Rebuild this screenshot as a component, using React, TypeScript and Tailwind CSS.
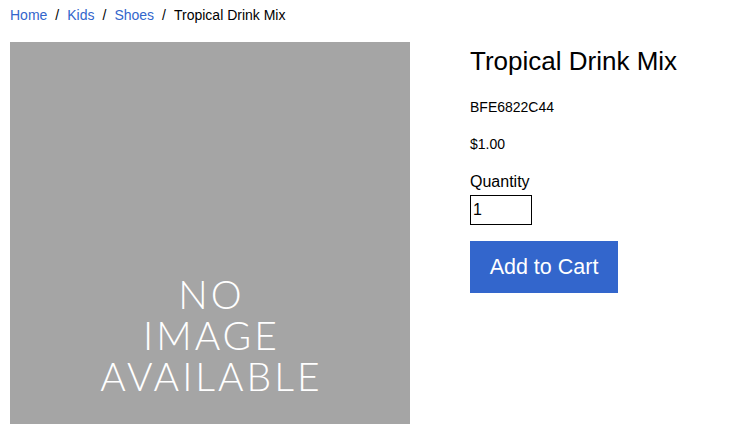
export default function App() {
  return (
    <div className="min-h-screen bg-white px-[10px] text-black" style={{ fontFamily: '"Liberation Sans", Arial, sans-serif' }}>
      {/* breadcrumb */}
      <nav className="flex h-[42px] items-start pt-[7px] text-[14px] leading-[16px]">
        <a href="#" className="text-[#3366cc]">Home</a>
        <span className="px-[8px]">/</span>
        <a href="#" className="text-[#3366cc]">Kids</a>
        <span className="px-[8px]">/</span>
        <a href="#" className="text-[#3366cc]">Shoes</a>
        <span className="px-[8px]">/</span>
        <span>Tropical Drink Mix</span>
      </nav>

      <div className="flex gap-[60px]">
        {/* placeholder image */}
        <div className="flex h-[400px] w-[400px] shrink-0 flex-col items-center bg-[#a5a5a5] pt-[232px] text-white">
          <div
            className="pl-[3px] text-center text-[39px] font-light leading-[41px] tracking-[3px]"
            style={{ fontFamily: 'Lato, "Open Sans", sans-serif' }}
          >
            <div>NO</div>
            <div>IMAGE</div>
            <div>AVAILABLE</div>
          </div>
        </div>

        {/* details */}
        <div className="flex flex-col items-start">
          <h1 className="mt-[4px] text-[26px] leading-[30px]">Tropical Drink Mix</h1>
          <p className="mt-[23px] text-[14px] leading-[16px]">BFE6822C44</p>
          <p className="mt-[21px] text-[14px] leading-[16px]">$1.00</p>
          <label className="mt-[21px] text-[16px] leading-[18px]" htmlFor="qty">Quantity</label>
          <input
            id="qty"
            defaultValue="1"
            className="mt-[4px] h-[30px] w-[62px] border border-black px-[2px] text-[16px] outline-none"
          />
          <button className="mt-[16px] h-[52px] w-[148px] bg-[#3366cc] text-[21.5px] text-white">
            Add to Cart
          </button>
        </div>
      </div>
    </div>
  );
}
